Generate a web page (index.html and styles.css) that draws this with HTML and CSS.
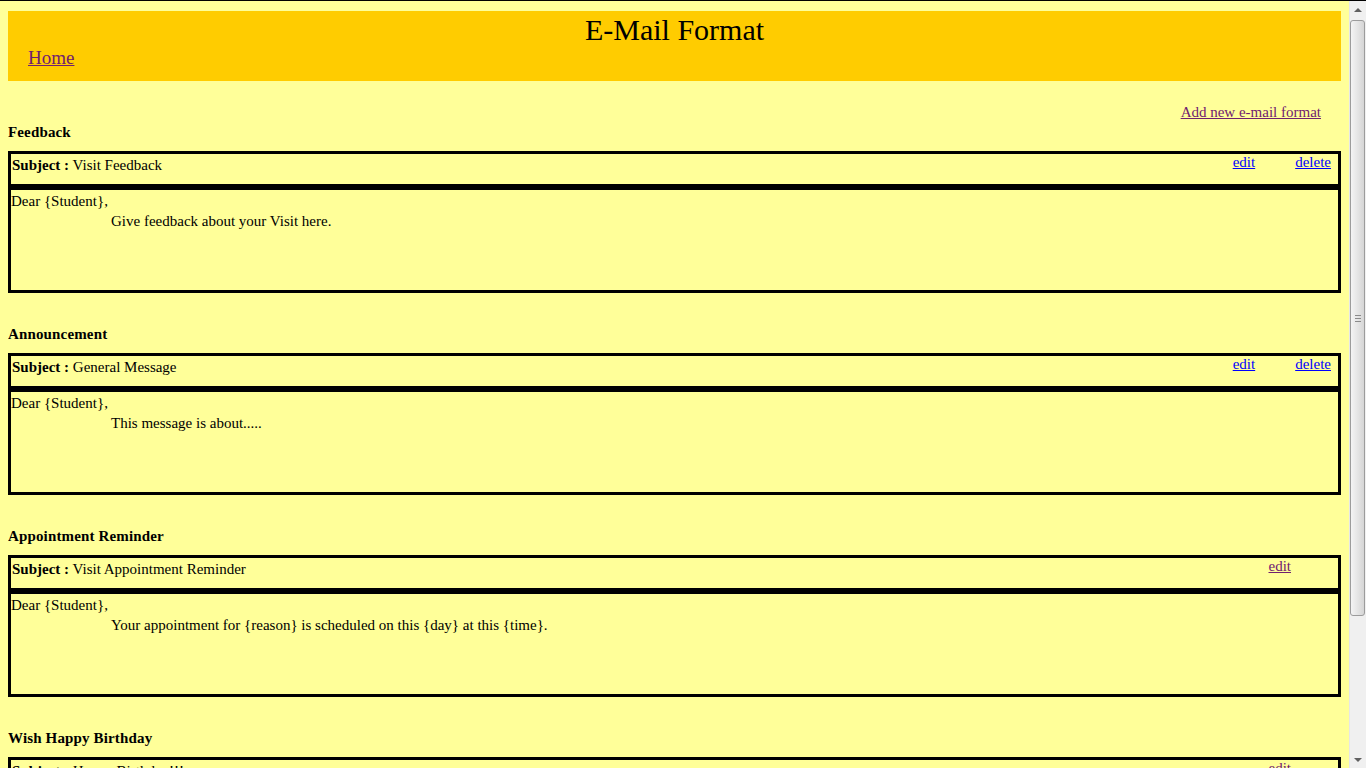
FILE: index.html
```html
<!DOCTYPE html>
<html>
<head>
<meta charset="utf-8">
<title>E-Mail Format</title>
<link rel="stylesheet" href="styles.css">
</head>
<body>
<div class="page-header">
  <h1 class="page-title">E-Mail Format</h1>
  <a class="home-link" href="#">Home</a>
</div>

<div class="toolbar">
  <a class="visited" href="#">Add new e-mail format</a>
</div>

<div class="section">
  <h2 class="section-title">Feedback</h2>
  <div class="subject-box">
    <div class="subject"><b>Subject :</b> Visit Feedback</div>
    <div class="actions">
      <a href="#">edit</a>
      <a href="#">delete</a>
    </div>
  </div>
  <div class="body-box">
    <div class="greeting">Dear {Student},</div>
    <div class="message">Give feedback about your Visit here.</div>
  </div>
</div>

<div class="section">
  <h2 class="section-title">Announcement</h2>
  <div class="subject-box">
    <div class="subject"><b>Subject :</b> General Message</div>
    <div class="actions">
      <a href="#">edit</a>
      <a href="#">delete</a>
    </div>
  </div>
  <div class="body-box">
    <div class="greeting">Dear {Student},</div>
    <div class="message">This message is about.....</div>
  </div>
</div>

<div class="section">
  <h2 class="section-title">Appointment Reminder</h2>
  <div class="subject-box">
    <div class="subject"><b>Subject :</b> Visit Appointment Reminder</div>
    <div class="actions single">
      <a class="visited" href="#">edit</a>
    </div>
  </div>
  <div class="body-box">
    <div class="greeting">Dear {Student},</div>
    <div class="message">Your appointment for {reason} is scheduled on this {day} at this {time}.</div>
  </div>
</div>

<div class="section">
  <h2 class="section-title">Wish Happy Birthday</h2>
  <div class="subject-box">
    <div class="subject"><b>Subject :</b> Happy Birthday!!!</div>
    <div class="actions single">
      <a class="visited" href="#">edit</a>
    </div>
  </div>
  <div class="body-box">
    <div class="greeting">Dear {Student},</div>
    <div class="message">Wish you a very Happy Birthday.</div>
  </div>
</div>

<div class="scrollbar" aria-hidden="true">
  <div class="sb-btn"><span class="arrow-up"></span></div>
  <div class="sb-track">
    <div class="sb-thumb"><span class="grip"></span></div>
  </div>
  <div class="sb-btn"><span class="arrow-down"></span></div>
</div>
</body>
</html>
```

FILE: styles.css
```css
html {
  border-top: 1px solid #000;
  background: #ffff99;
}

body {
  margin: 10px 25px 8px 8px;
  background: #ffff99;
  color: #000;
  font-family: "Liberation Serif", "Times New Roman", serif;
  font-size: 15px;
  line-height: 17px;
}

a {
  color: #0000ff;
  text-decoration: underline;
}

a.visited,
.home-link {
  color: #702070;
}

.page-header {
  background: #ffcc00;
  padding: 1px 20px 12px;
}

.page-title {
  margin: 0;
  font-size: 30px;
  line-height: 35px;
  font-weight: normal;
  text-align: center;
}

.home-link {
  display: inline-block;
  font-size: 19px;
  line-height: 22px;
}

.toolbar {
  margin-top: 23px;
  padding-right: 20px;
  text-align: right;
}

.section {
  margin-bottom: 33px;
}

.section-title {
  margin: 3px 0 10px;
  font-size: 15px;
  line-height: 17px;
  font-weight: bold;
  letter-spacing: 0.15px;
}

.subject-box {
  display: flex;
  justify-content: space-between;
  align-items: flex-start;
  height: 30px;
  border: 3px solid #000;
}

.subject {
  padding: 2px 0 0 1px;
  line-height: 19px;
}

.actions {
  display: flex;
  gap: 40px;
  padding-right: 7px;
  margin-top: 0;
}

.actions.single {
  padding-right: 47px;
}

.body-box {
  height: 99px;
  border: 3px solid #000;
  padding-top: 1px;
  line-height: 20px;
}

.message {
  padding-left: 100px;
}

/* simulated browser scrollbar */
.scrollbar {
  position: fixed;
  top: 1px;
  right: 0;
  bottom: 0;
  width: 17px;
  display: flex;
  flex-direction: column;
  background: #f0f0f0;
  border-left: 1px solid #e6e6e6;
  box-sizing: border-box;
}

.sb-btn {
  height: 17px;
  display: flex;
  align-items: center;
  justify-content: center;
  flex: none;
}

.arrow-up {
  width: 0;
  height: 0;
  border-left: 4px solid transparent;
  border-right: 4px solid transparent;
  border-bottom: 4px solid #606060;
}

.arrow-down {
  width: 0;
  height: 0;
  border-left: 4px solid transparent;
  border-right: 4px solid transparent;
  border-top: 4px solid #606060;
}

.sb-track {
  flex: 1;
  padding: 2px 0 0 0;
}

.sb-thumb {
  height: 594px;
  margin: 0 1px 0 0;
  border: 1px solid #9c9c9c;
  border-radius: 3px;
  background: linear-gradient(to right, #f4f4f4, #e2e2e2 60%, #d6d6d6);
  display: flex;
  align-items: center;
  justify-content: center;
}

.grip {
  width: 6px;
  height: 5px;
  border-top: 1px solid #8a8a8a;
  border-bottom: 1px solid #8a8a8a;
  position: relative;
}

.grip::after {
  content: "";
  position: absolute;
  left: 0;
  right: 0;
  top: 2px;
  border-top: 1px solid #8a8a8a;
}
```
